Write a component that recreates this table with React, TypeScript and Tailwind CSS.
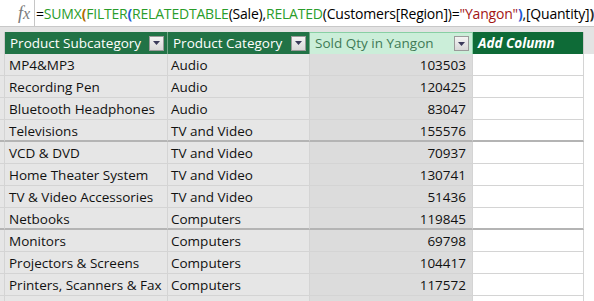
import React from "react";

const rows: [string, string, string][] = [
  ["MP4&MP3", "Audio", "103503"],
  ["Recording Pen", "Audio", "120425"],
  ["Bluetooth Headphones", "Audio", "83047"],
  ["Televisions", "TV and Video", "155576"],
  ["VCD & DVD", "TV and Video", "70937"],
  ["Home Theater System", "TV and Video", "130741"],
  ["TV & Video Accessories", "TV and Video", "51436"],
  ["Netbooks", "Computers", "119845"],
  ["Monitors", "Computers", "69798"],
  ["Projectors & Screens", "Computers", "104417"],
  ["Printers, Scanners & Fax", "Computers", "117572"],
  ["", "", ""],
];

const font = { fontFamily: '"Open Sans", "Noto Sans", sans-serif' };

function Drop() {
  return (
    <div className="w-[15px] h-[15px] bg-gradient-to-b from-[#f4f4f4] to-[#d8d8d8] border border-[#9a9a9a] flex items-center justify-center shrink-0">
      <svg width="7" height="4" viewBox="0 0 7 4">
        <path d="M0 0 L7 0 L3.5 4 Z" fill="#3a3a5a" />
      </svg>
    </div>
  );
}

export default function App() {
  return (
    <div className="w-[594px] h-[301px] overflow-hidden bg-white text-[13.5px]" style={font}>
      {/* formula bar */}
      <div className="h-[26px] flex bg-white">
        <div className="w-[42px] border-r border-[#c6c6c6] flex items-center justify-end pr-[4px]">
          <span className="text-[#7a7a7a] italic text-[18px]" style={{ fontFamily: '"Liberation Serif", serif' }}>
            f<span className="text-[16px]">x</span>
          </span>
        </div>
        <div className="pl-[1px] pt-[1px] flex items-center whitespace-nowrap text-[14px] tracking-[-0.2px] text-black">
          <span>=</span>
          <span className="text-[#2a9d2a]">SUMX</span>
          <span className="text-[#b06a00] font-bold">(</span>
          <span className="text-[#2a9d2a]">FILTER</span>
          <span className="text-[#1e5bd6] font-bold">(</span>
          <span className="text-[#2a9d2a]">RELATEDTABLE</span>
          <span>(Sale),</span>
          <span className="text-[#2a9d2a]">RELATED</span>
          <span>(Customers[Region])=</span>
          <span className="text-[#a31515]">"Yangon"</span>
          <span className="text-[#1e5bd6] font-bold">)</span>
          <span>,[Quantity]</span>
          <span className="font-bold text-[#2b2b2b]">)</span>
        </div>
      </div>
      {/* gray band */}
      <div className="h-[6px] bg-[#e3e3e3] border-t border-[#c8c8c8]" />
      {/* header */}
      <div className="grid grid-cols-[5px_163px_142px_163px_111px_1fr] h-[22px]">
        <div className="bg-[#e3e3e3] border-r border-[#c8c8c8]" />
        <div className="bg-[#217346] border-r border-[#6fa585] flex items-center justify-between pl-[5px] pr-[3px] text-white">
          <span>Product Subcategory</span>
          <Drop />
        </div>
        <div className="bg-[#217346] border-r border-[#6fa585] flex items-center justify-between pl-[5px] pr-[3px] text-white">
          <span>Product Category</span>
          <Drop />
        </div>
        <div className="bg-[#cbeed9] border-r border-t border-[#88d0a4] flex items-center justify-between pl-[5px] pr-[3px] text-[#3f7a55]">
          <span>Sold Qty in Yangon</span>
          <Drop />
        </div>
        <div className="bg-[#0e6b37] border-r border-[#c8c8c8] flex items-center pl-[5px] text-white font-bold italic">
          <span>Add Column</span>
        </div>
        <div className="bg-[#e3e3e3]" />
      </div>
      {/* rows */}
      {rows.map((r, i) => {
        const thick = i % 4 === 3;
        const b = thick ? "border-b-2 border-b-[#b4b4b4]" : "border-b border-b-[#d4d4d4]";
        return (
          <div key={i} className="grid grid-cols-[5px_163px_142px_163px_111px_1fr] h-[22px] overflow-hidden">
            <div className={`h-[22px] bg-[#e6e6e6] border-r border-r-[#d4d4d4] ${b}`} />
            <div className={`h-[22px] overflow-hidden leading-[20px] bg-[#e6e6e6] border-r border-r-[#d4d4d4] ${b} pl-[4px] pt-[1px] flex items-center text-[#111] whitespace-nowrap`}>
              {r[0]}
            </div>
            <div className={`h-[22px] overflow-hidden leading-[20px] bg-[#e6e6e6] border-r border-r-[#d4d4d4] ${b} pl-[3px] pt-[1px] flex items-center text-[#111] whitespace-nowrap`}>
              {r[1]}
            </div>
            <div className={`h-[22px] overflow-hidden leading-[20px] bg-[#dcdcdc] border-r border-r-[#d4d4d4] ${b} pr-[6px] pt-[1px] flex items-center justify-end text-[#111]`}>
              {r[2]}
            </div>
            <div className={`h-[22px] bg-white border-r border-r-[#d4d4d4] ${b}`} />
            <div className="h-[22px] bg-white" />
          </div>
        );
      })}
    </div>
  );
}
